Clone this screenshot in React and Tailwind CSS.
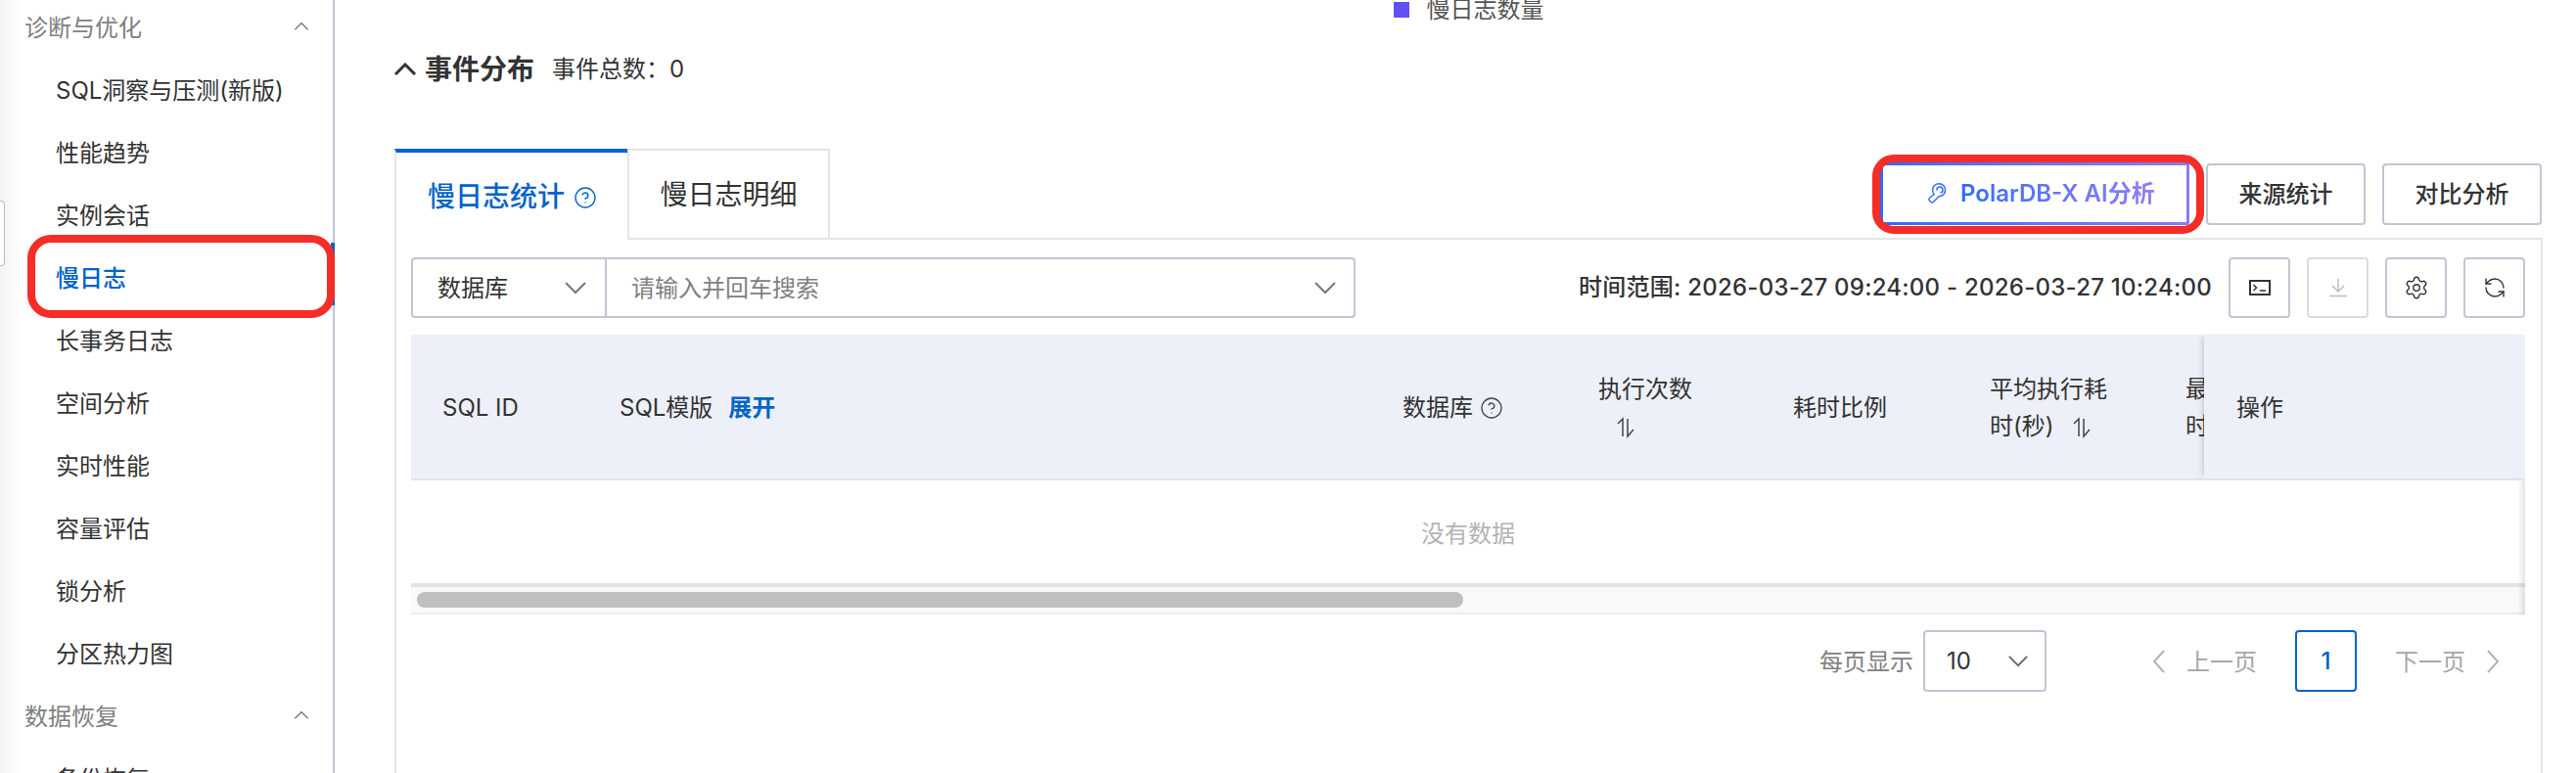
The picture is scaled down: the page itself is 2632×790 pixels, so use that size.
import React from "react";
import { CircleHelp, RefreshCcw, Settings } from "lucide-react";

const Chevron = ({ up, className }) => (
  <svg viewBox="0 0 24 14" fill="none" stroke="currentColor" strokeWidth="2" className={className}>
    <path d={up ? "M2 12 L12 2 L22 12" : "M2 2 L12 12 L22 2"} />
  </svg>
);

const SortIcon = ({ className = "" }) => (
  <svg viewBox="0 0 20 22" fill="none" stroke="#444" strokeWidth="1.5" className={`inline-block w-[20px] h-[22px] align-[-4px] ${className}`}>
    <path d="M7 20 V2 L2 7" />
    <path d="M12 2 V20 L18 13" />
  </svg>
);

const menuGroups = [
  {
    title: "诊断与优化",
    items: ["SQL洞察与压测(新版)", "性能趋势", "实例会话", "慢日志", "长事务日志", "空间分析", "实时性能", "容量评估", "锁分析", "分区热力图"],
  },
  { title: "数据恢复", items: ["备份恢复"] },
];

const Sidebar = () => (
  <aside className="w-[342px] shrink-0 border-r-2 border-[#c0c6d4] bg-gradient-to-r from-[#f3f3f3] to-white to-[7%] overflow-hidden">
    <div className="-mt-[3px]">
      {menuGroups.map((group) => (
        <div key={group.title}>
          <div className="h-16 pl-[25px] pr-[24px] flex items-center justify-between text-[#808080]">
            <span>{group.title}</span>
            <Chevron up className="w-[16px] h-[10px] -mt-1 text-[#777]" />
          </div>
          {group.items.map((item) => (
            <div
              key={item}
              className={`h-16 pl-[57px] flex items-center ${item === "慢日志" ? "text-[#0064c8] font-medium" : "text-[#333]"}`}
            >
              {item}
            </div>
          ))}
        </div>
      ))}
    </div>
  </aside>
);

const outlineBtn = "h-[63px] w-[163px] rounded border-2 border-[#c0c6d4] bg-white flex items-center justify-center font-medium text-[#333]";
const iconBtn = "h-[62px] w-[63px] rounded border-2 flex items-center justify-center";

const Tabs = () => (
  <div className="mt-[60px] flex h-[93px]">
    <div className="w-[238px] border-l-2 border-t-4 border-l-[#e3e5e8] border-t-[#0064c8] flex items-center pl-[32px] text-[28px] text-[#0064c8] font-medium">
      慢日志统计
      <CircleHelp className="ml-[9px] w-[24px] h-[24px] mt-[3px]" strokeWidth={1.4} />
    </div>
    <div className="w-[207px] border-2 border-[#e3e5e8] flex items-center justify-center text-[28px] text-[#333]">
      慢日志明细
    </div>
    <div className="flex-1 border-b-2 border-[#e3e5e8] flex items-end justify-end gap-[17px] pb-[13px] pr-[1px]">
      <div className="w-[316px] h-[64px] p-[3px] bg-gradient-to-r from-[#2f6bff] to-[#8a7cf0] rounded-[2px]">
        <div className="h-full bg-white flex items-center pl-[45px] gap-[14px]">
          <svg viewBox="0 0 20 24" fill="none" stroke="#3b6cf5" strokeWidth="1.5" className="w-[20px] h-[24px]">
            <path d="M7.2 12.5 A6.5 6.5 0 1 1 12 14.7 L6.5 20.5 Q5 21.5 3.8 20.3 L2.2 18.7 Q1.2 17.5 2.5 16.2 Z" />
            <path d="M10 8.5 A3 3 0 1 1 13.5 11" />
          </svg>
          <span className="font-semibold bg-gradient-to-r from-[#2f6bff] to-[#8f7ff0] bg-clip-text text-transparent">
            PolarDB-X AI分析
          </span>
        </div>
      </div>
      <div className={outlineBtn}>来源统计</div>
      <div className={outlineBtn}>对比分析</div>
    </div>
  </div>
);

const Toolbar = () => (
  <div className="pt-[18px] flex items-center">
    <div className="w-[965px] h-[62px] flex rounded border-2 border-[#c0c6d4] bg-white">
      <div className="w-[198px] border-r-2 border-[#c0c6d4] flex items-center justify-between pl-[25px] pr-[18px] text-[#333]">
        <span className="pt-[2px]">数据库</span>
        <Chevron className="w-[24px] h-[14px] text-[#777]" />
      </div>
      <div className="flex-1 flex items-center justify-between pl-[25px] pr-[17px] text-[#808080]">
        <span className="pt-[2px]">请输入并回车搜索</span>
        <Chevron className="w-[24px] h-[14px] text-[#777]" />
      </div>
    </div>
    <div className="ml-auto flex items-center gap-[17px]">
      <span className="font-medium text-[#333] tracking-[0.25px]">时间范围: 2026-03-27 09:24:00 - 2026-03-27 10:24:00</span>
      <div className={`${iconBtn} border-[#c0c6d4]`}>
        <svg viewBox="0 0 22 16" fill="none" stroke="#333" strokeWidth="2" className="w-[22px] h-[16px]">
          <rect x="1" y="1" width="20" height="14" />
          <path strokeWidth="1.5" d="M4.5 5 L7.5 8 L4.5 11 M11 11 H17" />
        </svg>
      </div>
      <div className={`${iconBtn} border-[#d8dbe2]`}>
        <svg viewBox="0 0 20 20" fill="none" stroke="#bdbdbd" strokeWidth="1.5" className="w-[20px] h-[20px]">
          <path d="M10 1 V13 M4 8 L10 14 L16 8 M1 18.5 H19" />
        </svg>
      </div>
      <div className={`${iconBtn} border-[#c0c6d4]`}>
        <Settings className="w-[26px] h-[26px] text-[#333]" strokeWidth={1.3} />
      </div>
      <div className={`${iconBtn} border-[#c0c6d4]`}>
        <RefreshCcw className="w-[24px] h-[24px] text-[#333]" strokeWidth={1.4} />
      </div>
    </div>
  </div>
);

const columns = [
  { w: "w-[181px]", body: "SQL ID" },
  {
    w: "w-[800px]",
    body: (
      <>
        SQL模版<span className="ml-[16px] text-[#0064c8] font-semibold">展开</span>
      </>
    ),
  },
  {
    w: "w-[200px]",
    body: (
      <span className="flex items-center">
        数据库
        <CircleHelp className="ml-[7px] w-[24px] h-[24px] text-[#444]" strokeWidth={1.3} />
      </span>
    ),
  },
  {
    w: "w-[199px]",
    body: (
      <>
        执行次数 <SortIcon className="ml-[18px]" />
      </>
    ),
  },
  { w: "w-[201px]", body: "耗时比例" },
  {
    w: "w-[200px]",
    body: (
      <>
        平均执行耗时(秒) <SortIcon className="ml-[12px]" />
      </>
    ),
  },
  {
    w: "w-[200px]",
    body: (
      <>
        最大执行耗时(秒) <SortIcon className="ml-[12px]" />
      </>
    ),
  },
];

const SlowLogTable = () => (
  <div className="mt-[17px] relative">
    <div className="flex h-[149px] border-b-2 border-[#e3e5e8] bg-[#edf0f8] text-[#333]">
      <div className="flex-1 min-w-0 flex overflow-hidden">
        {columns.map((col, i) => (
          <div key={i} className={`${col.w} shrink-0 pl-[32px] pr-[30px] pt-[2px] flex items-center leading-[38px]`}>
            <div>{col.body}</div>
          </div>
        ))}
      </div>
      <div className="w-[328px] shrink-0 pl-[33px] pt-[2px] flex items-center bg-[#edf0f8] relative shadow-[-4px_0_6px_-3px_rgba(0,0,0,0.2)]">
        操作
      </div>
    </div>
    <div className="h-[105px] pt-[4px] flex items-center justify-center text-[#b3b3b3]">没有数据</div>
    <div className="h-[32px] border-t-4 border-b-2 border-t-[#e3e3e3] border-b-[#ececec] bg-[#f9f9f9] flex items-center pl-[6px]">
      <div className="w-[1069px] h-4 rounded-full bg-[#bfbfbf]" />
    </div>
    {/* fixed column shadow */}
    <div className="absolute right-0 top-[149px] bottom-0 w-[8px] bg-gradient-to-l from-black/10 to-transparent" />
  </div>
);

const Pagination = () => (
  <div className="mt-[16px] h-[63px] flex items-center justify-end pr-[26px]">
    <span className="pt-[2px] text-[#808080]">每页显示</span>
    <div className="ml-[10px] w-[126px] h-[63px] rounded border-2 border-[#c0c6d4] flex items-center justify-between pl-[22px] pr-[16px] text-[#333]">
      10
      <Chevron className="w-[22px] h-[13px] text-[#666]" />
    </div>
    <svg viewBox="0 0 14 26" fill="none" stroke="#b3b3b3" strokeWidth="2" className="ml-[108px] w-[14px] h-[26px]">
      <path d="M12 2 L2 13 L12 24" />
    </svg>
    <span className="ml-[21px] pt-[2px] text-[#a6a6a6]">上一页</span>
    <div className="ml-[39px] w-[63px] h-[63px] rounded border-2 border-[#0064c8] flex items-center justify-center text-[#0064c8] font-medium">
      1
    </div>
    <span className="ml-[39px] pt-[2px] text-[#a6a6a6]">下一页</span>
    <svg viewBox="0 0 14 26" fill="none" stroke="#b3b3b3" strokeWidth="2" className="ml-[21px] w-[14px] h-[26px]">
      <path d="M2 2 L12 13 L2 24" />
    </svg>
  </div>
);

export default function App() {
  return (
    <div className="relative flex w-[2632px] h-[790px] overflow-hidden bg-white text-[24px] font-[Inter,'Noto_Sans_CJK_SC',sans-serif]">
      <Sidebar />

      <main className="flex-1 min-w-0 pl-[61px] pr-[34px] flex flex-col">
        {/* chart legend */}
        <div className="h-5 flex items-center justify-center gap-[18px] text-[#555]">
          <span className="w-4 h-4 bg-[#6150f5]" />
          慢日志数量
        </div>

        <div className="mt-[30px] h-[42px] flex items-center text-[#333]">
          <Chevron up className="w-[24px] h-[14px] -ml-[1px] stroke-[3]" />
          <span className="ml-[8px] text-[28px] font-semibold">事件分布</span>
          <span className="ml-[18px]">事件总数：0</span>
        </div>

        <Tabs />

        <div className="flex-1 border-x-2 border-[#e3e5e8] pl-[15px] pr-[16px]">
          <Toolbar />
          <SlowLogTable />
          <Pagination />
        </div>
      </main>

      {/* red annotation marks */}
      <div className="absolute left-0 top-[205px] w-[5px] h-[67px] bg-white border border-l-0 border-[#bbb] rounded-r" />
      <div className="absolute left-[338px] top-[248px] w-[4px] h-[64px] bg-[#0064c8]" />
      <div className="absolute left-[28px] top-[240px] w-[314px] h-[85px] border-[8px] border-[#f52d26] rounded-[24px]" />
      <div className="absolute left-[1913px] top-[158px] w-[339px] h-[81px] border-[8px] border-[#f52d26] rounded-[22px]" />
    </div>
  );
}
